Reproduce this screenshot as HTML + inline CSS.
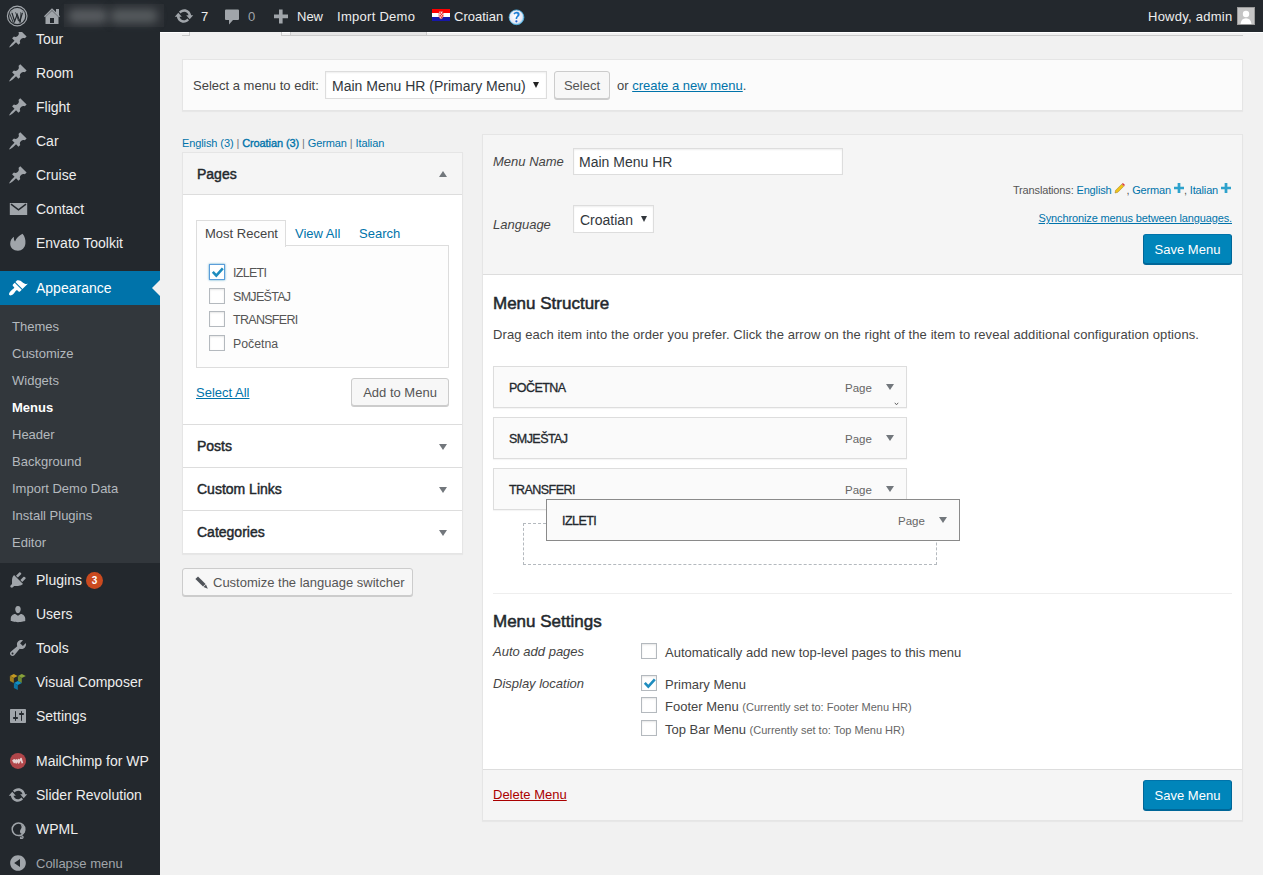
<!DOCTYPE html>
<html><head><meta charset="utf-8">
<style>
*{box-sizing:border-box}
html,body{margin:0;padding:0;width:1263px;height:875px;overflow:hidden;background:#f1f1f1;font-family:"Liberation Sans",sans-serif;font-size:13px;color:#444}
.abs{position:absolute}
a{color:#0073aa}
/* admin bar */
#ab{position:absolute;left:0;top:0;width:1263px;height:32px;background:#23282d;color:#eee;font-size:13px}
#ab .t{position:absolute;top:1px;line-height:32px;white-space:nowrap}
/* sidebar */
#side{position:absolute;left:0;top:32px;width:160px;height:843px;background:#23282d;overflow:hidden}
#menu{position:absolute;left:0;top:-10px;width:160px;margin:0;padding:0;list-style:none}
.mi{position:relative;height:34px;color:#eee;font-size:14px;line-height:34px;white-space:nowrap}
.mi .ic{position:absolute;left:8px;top:7px;width:20px;height:20px}
.mi .lb{position:absolute;left:36px;top:0}
.sep{height:11px}
.cur{background:#0073aa;color:#fff}
.sub{background:#32373c;padding:7px 0 8px}
.sub div{position:relative;top:1px;height:27px;line-height:27px;padding-left:12px;font-size:13px;color:#b4b9be;white-space:nowrap}
.sub div.on{color:#fff;font-weight:bold}
/* main */
.box{position:absolute;background:#fff;border:1px solid #e5e5e5;box-shadow:0 1px 1px rgba(0,0,0,.04)}
.btn{position:absolute;background:#f7f7f7;border:1px solid #ccc;border-radius:3px;box-shadow:0 1px 0 #ccc;color:#555;font-size:13px;text-align:center;white-space:nowrap;padding-top:1px}
.pbtn{position:absolute;background:#0085ba;border:1px solid #0073aa;border-color:#0073aa #006799 #006799;border-radius:3px;box-shadow:0 1px 0 #006799;color:#fff;font-size:14px;text-align:center;white-space:nowrap;padding-top:1px}
.cb{position:absolute;width:16px;height:16px;border:1px solid #b4b9be;background:#fff;box-shadow:inset 0 1px 2px rgba(0,0,0,.1)}
.arr{position:absolute;width:0;height:0;border-left:4.5px solid transparent;border-right:4.5px solid transparent;border-top:6px solid #72777c}
.arru{position:absolute;width:0;height:0;border-left:4.5px solid transparent;border-right:4.5px solid transparent;border-bottom:6px solid #72777c}
.t{position:absolute;white-space:nowrap}
</style></head><body>

<!-- ADMIN BAR -->
<div id="ab">
 <svg class="abs" style="left:6px;top:5px" width="22" height="22" viewBox="0 0 22 22">
  <circle cx="11.2" cy="11" r="9.8" fill="none" stroke="#a0a5aa" stroke-width="1.2"/>
  <circle cx="11.2" cy="11" r="8" fill="#a0a5aa"/>
  <path d="M5.6 6.6 L8.6 16.4 L11.2 9.4 L13.8 16.4 L16.8 6.6" fill="none" stroke="#23282d" stroke-width="1.2"/><path d="M3.6 8.4 L7.6 18.4 M9.6 7 L12.6 16.2 M15 7 L14.4 17.6" fill="none" stroke="#23282d" stroke-width="0.9"/>
  <path d="M3.8 7.2 H8.6 M9.6 7.2 H13.6 M15 7.2 H18.4" stroke="#a0a5aa" stroke-width="1.2"/>
 </svg>
 <svg class="abs" style="left:43px;top:7px" width="18" height="18" viewBox="0 0 18 18">
  <path d="M1 9.2 L9 1.2 L13 5.2 V2 H16 V8.2 L17 9.2 L16 10.2 L9 3.2 L2 10.2 Z" fill="#a0a5aa"/>
  <path d="M2.5 10 L9 3.8 L15.5 10 V17 H2.5 Z" fill="#a0a5aa"/>
  <rect x="7" y="11" width="4" height="5" fill="#23282d"/>
 </svg>
 <div class="abs" style="left:64px;top:4px;width:100px;height:23px;background:#2b2f34"></div>
 <div class="abs" style="left:68px;top:9px;width:40px;height:14px;border-radius:7px;background:#575b5f;filter:blur(4px)"></div>
 <div class="abs" style="left:110px;top:9px;width:48px;height:14px;border-radius:7px;background:#555a5d;filter:blur(4px)"></div>
 <svg class="abs" style="left:174px;top:6px" width="20" height="20" viewBox="0 0 20 20"><path fill="#a0a5aa" d="M10.2 3.28c3.53 0 6.43 2.61 6.92 6h2.08l-3.5 4-3.5-4h2.32c-.45-1.970-2.21-3.450-4.32-3.45-1.45 0-2.73.71-3.54 1.78L4.95 5.66C6.23 4.2 8.11 3.28 10.2 3.28zm-.4 13.44c-3.52 0-6.43-2.61-6.92-6H.8l3.5-4c1.17 1.33 2.33 2.67 3.5 4H5.48c.45 1.97 2.21 3.45 4.32 3.45 1.45 0 2.73-.71 3.54-1.78l1.71 1.95c-1.28 1.46-3.15 2.38-5.25 2.38z"/></svg>
 <span class="t" style="left:201px;color:#eee">7</span>
 <svg class="abs" style="left:224px;top:8px" width="16" height="18" viewBox="0 0 16 18">
  <path d="M2 1.5 H14 A1 1 0 0 1 15 2.5 V11 A1 1 0 0 1 14 12 H9 L5 16.5 V12 H2 A1 1 0 0 1 1 11 V2.5 A1 1 0 0 1 2 1.5 Z" fill="#a0a5aa"/>
 </svg>
 <span class="t" style="left:248px;color:#a0a5aa">0</span>
 <svg class="abs" style="left:273px;top:9px" width="16" height="15" viewBox="0 0 16 15">
  <path d="M6 0.5 H9.6 V5.6 H15 V9.2 H9.6 V14.5 H6 V9.2 H1 V5.6 H6 Z" fill="#a0a5aa"/>
 </svg>
 <span class="t" style="left:297px">New</span>
 <span class="t" style="left:337px;letter-spacing:0.28px">Import Demo</span>
 <svg class="abs" style="left:432px;top:9px" width="18" height="12" viewBox="0 0 18 12">
  <rect width="18" height="4" fill="#ff0000"/><rect y="4" width="18" height="4" fill="#fff"/><rect y="8" width="18" height="4" fill="#1717a8"/>
  <path d="M7 2.5 H11 V7 Q11 9.4 9 10 Q7 9.4 7 7 Z" fill="#fff" stroke="#d33" stroke-width="0.6"/>
  <rect x="7.6" y="3.3" width="1.4" height="1.4" fill="#e22"/><rect x="9.8" y="3.3" width="1.4" height="1.4" fill="#e22"/>
  <rect x="8.7" y="4.7" width="1.4" height="1.4" fill="#e22"/><rect x="7.6" y="6.1" width="1.4" height="1.4" fill="#e22"/><rect x="9.8" y="6.1" width="1.4" height="1.4" fill="#e22"/>
  <rect x="8.7" y="7.5" width="1.4" height="1.4" fill="#e22"/>
 </svg>
 <span class="t" style="left:454px">Croatian</span>
 <svg class="abs" style="left:508px;top:9px" width="17" height="17" viewBox="0 0 17 17">
  <defs><radialGradient id="hg" cx="0.45" cy="0.45" r="0.6"><stop offset="0" stop-color="#ffffff"/><stop offset="0.7" stop-color="#e6e8f5"/><stop offset="1" stop-color="#5fb8e6"/></radialGradient></defs>
  <circle cx="8.5" cy="8.3" r="7.4" fill="url(#hg)" stroke="#4fb3e3" stroke-width=".8"/>
  <path d="M5.4 4.4 Q6.6 2.8 8.8 2.8 Q11.6 3 11.6 5.4 Q11.6 7 10 8 Q9.2 8.6 9.2 10 H7.6 Q7.5 8 8.8 7 Q9.6 6.3 9.6 5.6 Q9.5 4.6 8.4 4.6 Q7.2 4.6 6.4 5.4 Z" fill="#1f7fd6"/>
  <circle cx="8.4" cy="12.3" r="1.1" fill="#1a5fd0"/>
 </svg>
 <span class="t" style="left:1148px;letter-spacing:0.25px">Howdy, admin</span>
 <div class="abs" style="left:1237px;top:7px;width:18px;height:18px;background:#c5c5c5;border:1px solid #9a9a9a;overflow:hidden">
  <svg class="abs" style="left:0;top:0" width="16" height="16" viewBox="0 0 16 16">
   <circle cx="8" cy="6" r="3.2" fill="#fff"/><path d="M2.5 16 Q3 10.5 8 10.2 Q13 10.5 13.5 16 Z" fill="#fff"/>
  </svg>
 </div>
</div>

<!-- MAIN -->
<div id="main">
 <!-- tabs remnants -->
 <div class="abs" style="left:160px;top:32px;width:1103px;height:1px;background:#fff"></div>
 <div class="abs" style="left:182px;top:35px;width:1061px;height:1px;background:#ccc"></div>
 <div class="abs" style="left:189px;top:32px;width:93px;height:4px;background:#f1f1f1;border-left:1px solid #ccc;border-right:1px solid #ccc"></div>
 <div class="abs" style="left:290px;top:32px;width:137px;height:4px;background:#e5e5e5;border:1px solid #ccc;border-top:0"></div>

 <!-- manage menus -->
 <div class="box" style="left:182px;top:59px;width:1061px;height:52px;background:#fbfbfb"></div>
 <span class="t" style="left:193px;top:79px;line-height:13px">Select a menu to edit:</span>
 <div class="abs" style="left:325px;top:71px;width:222px;height:28px;background:#fff;border:1px solid #ddd;box-shadow:inset 0 1px 2px rgba(0,0,0,.07)"></div>
 <span class="t" style="left:332px;top:79px;line-height:14px;font-size:14px;color:#32373c">Main Menu HR (Primary Menu)</span>
 <div class="arr" style="left:533px;top:82px;border-top-color:#222;border-left-width:3.5px;border-right-width:3.5px;border-top-width:6px"></div>
 <div class="btn" style="left:554px;top:71px;width:56px;height:28px;line-height:26px">Select</div>
 <span class="t" style="left:617px;top:79px;line-height:13px">or <a style="text-decoration:underline">create a new menu</a>.</span>

 <!-- language links -->
 <span class="t" style="left:182px;top:138px;line-height:11px;font-size:11px;color:#72777c;letter-spacing:-0.1px"><a style="text-decoration:none">English (3)</a> | <a style="text-decoration:none;-webkit-text-stroke:0.35px #0073aa">Croatian (3)</a> | <a style="text-decoration:none">German</a> | <a style="text-decoration:none">Italian</a></span>

 <!-- accordion -->
 <div class="box" style="left:182px;top:152px;width:281px;height:402px"></div>
 <div class="abs" style="left:183px;top:153px;width:279px;height:42px;background:#f5f5f5;border-bottom:1px solid #ddd"></div>
 <span class="t" style="left:197px;top:167px;line-height:14px;font-size:14px;-webkit-text-stroke:0.45px #23282d;color:#23282d">Pages</span>
 <div class="arru" style="left:439px;top:171px"></div>
 <!-- tabs -->
 <div class="abs" style="left:196px;top:245px;width:253px;height:123px;background:#fdfdfd;border:1px solid #ddd"></div>
 <div class="abs" style="left:196px;top:220px;width:90px;height:27px;background:#fdfdfd;border:1px solid #ddd;border-bottom:0"></div>
 <span class="t" style="left:205px;top:227px;line-height:13px">Most Recent</span>
 <span class="t" style="left:295px;top:227px;line-height:13px;color:#0073aa">View All</span>
 <span class="t" style="left:359px;top:227px;line-height:13px;color:#0073aa">Search</span>
 <div class="cb" style="left:209px;top:264px;border-color:#5b9dd9;box-shadow:0 0 2px rgba(30,140,190,.8)"></div>
 <svg class="abs" style="left:209px;top:264px" width="16" height="16" viewBox="0 0 16 16"><path d="M3.8 7.8L7.3 11.6L13.8 4.4" fill="none" stroke="#1e8cbe" stroke-width="2.6"/></svg>
 <div class="cb" style="left:209px;top:288px"></div>
 <div class="cb" style="left:209px;top:311px"></div>
 <div class="cb" style="left:209px;top:335px"></div>
 <span class="t" style="left:233px;top:267px;line-height:13px;color:#555;font-size:12.5px;letter-spacing:-0.7px">IZLETI</span>
 <span class="t" style="left:233px;top:291px;line-height:13px;color:#555;font-size:12.5px;letter-spacing:-0.7px">SMJEŠTAJ</span>
 <span class="t" style="left:233px;top:314px;line-height:13px;color:#555;font-size:12.5px;letter-spacing:-0.7px">TRANSFERI</span>
 <span class="t" style="left:233px;top:338px;line-height:13px;color:#555;font-size:12.3px">Početna</span>
 <span class="t" style="left:196px;top:386px;line-height:13px"><a style="text-decoration:underline">Select All</a></span>
 <div class="btn" style="left:351px;top:378px;width:98px;height:28px;line-height:26px">Add to Menu</div>
 <div class="abs" style="left:183px;top:424px;width:279px;height:1px;background:#ddd"></div>
 <span class="t" style="left:197px;top:439px;line-height:14px;font-size:14px;-webkit-text-stroke:0.45px #23282d;color:#23282d">Posts</span>
 <div class="arr" style="left:439px;top:444px"></div>
 <div class="abs" style="left:183px;top:467px;width:279px;height:1px;background:#ddd"></div>
 <span class="t" style="left:197px;top:482px;line-height:14px;font-size:14px;-webkit-text-stroke:0.45px #23282d;color:#23282d">Custom Links</span>
 <div class="arr" style="left:439px;top:487px"></div>
 <div class="abs" style="left:183px;top:510px;width:279px;height:1px;background:#ddd"></div>
 <span class="t" style="left:197px;top:525px;line-height:14px;font-size:14px;-webkit-text-stroke:0.45px #23282d;color:#23282d">Categories</span>
 <div class="arr" style="left:439px;top:530px"></div>

 <div class="btn" style="left:182px;top:568px;width:231px;height:28px;line-height:26px;text-align:left;padding-left:12px">
  <svg style="position:absolute;left:12px;top:7px" width="14" height="14" viewBox="0 0 14 14"><path d="M3 0.4L10.6 8 8 10.6 0.4 3z" fill="#50545a"/><path d="M11 8.5L12.8 12.8 8.5 11z" fill="#50545a"/></svg>
  <span style="position:absolute;left:30px;top:7px;line-height:13px">Customize the language switcher</span>
 </div>

 <!-- menu edit -->
 <div class="box" style="left:482px;top:134px;width:761px;height:687px"></div>
 <div class="abs" style="left:483px;top:135px;width:759px;height:140px;background:#f5f5f5;border-bottom:1px solid #ddd"></div>
 <span class="t" style="left:493px;top:155px;line-height:13px;font-style:italic">Menu Name</span>
 <div class="abs" style="left:573px;top:148px;width:270px;height:27px;background:#fff;border:1px solid #ddd;box-shadow:inset 0 1px 2px rgba(0,0,0,.07)"></div>
 <span class="t" style="left:579px;top:155px;line-height:14px;font-size:14px;color:#32373c">Main Menu HR</span>
 <span class="t" style="right:32px;top:182px;line-height:11px;font-size:11px;color:#555;letter-spacing:-0.15px">Translations: <a style="text-decoration:none">English</a> <svg width="12" height="12" viewBox="0 0 12 12" style="vertical-align:0"><path d="M1 11l.7-2.8 6-6 2.1 2.1-6 6z" fill="#f0c419" stroke="#9c7a1c" stroke-width=".5"/><path d="M7.9 1.9l1-1 2.1 2.1-1 1z" fill="#d33"/></svg>, <a style="text-decoration:none">German</a> <svg width="10" height="10" viewBox="0 0 11 11" style="vertical-align:1px"><path d="M4 0h3v4h4v3h-4v4h-3v-4h-4v-3h4z" fill="#2ea2cc"/></svg>, <a style="text-decoration:none">Italian</a> <svg width="10" height="10" viewBox="0 0 11 11" style="vertical-align:1px"><path d="M4 0h3v4h4v3h-4v4h-3v-4h-4v-3h4z" fill="#2ea2cc"/></svg></span>
 <span class="t" style="left:493px;top:218px;line-height:13px;font-style:italic">Language</span>
 <div class="abs" style="left:573px;top:205px;width:81px;height:28px;background:#fff;border:1px solid #ddd;box-shadow:inset 0 1px 2px rgba(0,0,0,.07)"></div>
 <span class="t" style="left:580px;top:213px;line-height:14px;font-size:14px;color:#32373c">Croatian</span>
 <div class="arr" style="left:641px;top:216px;border-top-color:#32373c;border-left-width:3.5px;border-right-width:3.5px"></div>
 <span class="t" style="right:31px;top:213px;line-height:11px;font-size:11px;letter-spacing:-0.13px"><a style="text-decoration:underline">Synchronize menus between languages.</a></span>
 <div class="pbtn" style="left:1143px;top:234px;width:89px;height:30px;line-height:28px;font-size:13px">Save Menu</div>

 <span class="t" style="left:493px;top:295px;line-height:17px;font-size:17px;-webkit-text-stroke:0.5px #23282d;color:#23282d">Menu Structure</span>
 <span class="t" style="left:493px;top:328px;line-height:13px;letter-spacing:0.08px">Drag each item into the order you prefer. Click the arrow on the right of the item to reveal additional configuration options.</span>

 <div class="abs" style="left:493px;top:366px;width:414px;height:42px;background:#fafafa;border:1px solid #ddd;box-shadow:0 1px 1px rgba(0,0,0,.04)"></div>
 <span class="t" style="left:509px;top:382px;line-height:13px;font-size:12.5px;letter-spacing:-0.55px;-webkit-text-stroke:0.3px #23282d;color:#23282d">POČETNA</span>
 <span class="t" style="left:845px;top:382px;line-height:12px;font-size:11.5px;color:#666">Page</span>
 <div class="arr" style="left:886px;top:384px"></div>
 <svg class="abs" style="left:894px;top:402px" width="5" height="4" viewBox="0 0 5 4"><path d="M0.8 0.8L2.5 2.8 4.2 0.8" fill="none" stroke="#555" stroke-width=".9"/></svg>
 <div class="abs" style="left:493px;top:417px;width:414px;height:42px;background:#fafafa;border:1px solid #ddd;box-shadow:0 1px 1px rgba(0,0,0,.04)"></div>
 <span class="t" style="left:509px;top:433px;line-height:13px;font-size:12.5px;letter-spacing:-0.55px;-webkit-text-stroke:0.3px #23282d;color:#23282d">SMJEŠTAJ</span>
 <span class="t" style="left:845px;top:433px;line-height:12px;font-size:11.5px;color:#666">Page</span>
 <div class="arr" style="left:886px;top:435px"></div>
 <div class="abs" style="left:493px;top:468px;width:414px;height:42px;background:#fafafa;border:1px solid #ddd;box-shadow:0 1px 1px rgba(0,0,0,.04)"></div>
 <span class="t" style="left:509px;top:484px;line-height:13px;font-size:12.5px;letter-spacing:-0.55px;-webkit-text-stroke:0.3px #23282d;color:#23282d">TRANSFERI</span>
 <span class="t" style="left:845px;top:484px;line-height:12px;font-size:11.5px;color:#666">Page</span>
 <div class="arr" style="left:886px;top:486px"></div>
 <div class="abs" style="left:523px;top:523px;width:414px;height:42px;border:1px dashed #b4b9be"></div>
 <div class="abs" style="left:546px;top:499px;width:414px;height:42px;background:#fafafa;border:1px solid #8a8a8a"></div>
 <span class="t" style="left:562px;top:515px;line-height:13px;font-size:12.5px;letter-spacing:-0.55px;-webkit-text-stroke:0.3px #23282d;color:#23282d">IZLETI</span>
 <span class="t" style="left:898px;top:515px;line-height:12px;font-size:11.5px;color:#666">Page</span>
 <div class="arr" style="left:939px;top:517px"></div>

 <div class="abs" style="left:493px;top:593px;width:739px;height:1px;background:#eee"></div>
 <span class="t" style="left:493px;top:613px;line-height:17px;font-size:17px;-webkit-text-stroke:0.5px #23282d;color:#23282d">Menu Settings</span>
 <span class="t" style="left:493px;top:645px;line-height:13px;font-style:italic">Auto add pages</span>
 <span class="t" style="left:493px;top:677px;line-height:13px;font-style:italic">Display location</span>
 <div class="cb" style="left:641px;top:643px"></div>
 <div class="cb" style="left:641px;top:675px"></div>
 <svg class="abs" style="left:641px;top:675px" width="16" height="16" viewBox="0 0 16 16"><path d="M3.8 7.8L7.3 11.6L13.8 4.4" fill="none" stroke="#1e8cbe" stroke-width="2.6"/></svg>
 <div class="cb" style="left:641px;top:697px"></div>
 <div class="cb" style="left:641px;top:720px"></div>
 <span class="t" style="left:665px;top:646px;line-height:13px">Automatically add new top-level pages to this menu</span>
 <span class="t" style="left:665px;top:678px;line-height:13px">Primary Menu</span>
 <span class="t" style="left:665px;top:700px;line-height:13px">Footer Menu <span style="font-size:11px;color:#666">(Currently set to: Footer Menu HR)</span></span>
 <span class="t" style="left:665px;top:723px;line-height:13px">Top Bar Menu <span style="font-size:11px;color:#666">(Currently set to: Top Menu HR)</span></span>

 <div class="abs" style="left:483px;top:769px;width:759px;height:51px;background:#f5f5f5;border-top:1px solid #ddd"></div>
 <span class="t" style="left:493px;top:788px;line-height:13px"><a style="color:#a00;text-decoration:underline">Delete Menu</a></span>
 <div class="pbtn" style="left:1143px;top:780px;width:89px;height:30px;line-height:28px;font-size:13px">Save Menu</div>
</div>

<!-- SIDEBAR -->
<div id="side">
<div id="menu">
 <div class="mi"><svg class="ic" viewBox="0 0 20 20"><path fill="#a0a5aa" d="M10.44 3.02l1.82-1.82 6.36 6.35-1.83 1.82c-1.05-.68-2.48-.57-3.41.36l-.75.75c-.92.93-1.04 2.35-.35 3.41l-1.83 1.82-2.41-2.41-2.8 2.79c-.42.42-3.38 2.710-3.8 2.29s1.86-3.39 2.28-3.81l2.79-2.79L4.1 9.36l1.83-1.82c1.05.69 2.48.57 3.4-.36l.75-.75c.93-.92 1.05-2.35.36-3.41z"/></svg><span class="lb">Tour</span></div>
 <div class="mi"><svg class="ic" viewBox="0 0 20 20"><path fill="#a0a5aa" d="M10.44 3.02l1.82-1.82 6.36 6.35-1.830 1.82c-1.05-.68-2.48-.57-3.41.36l-.75.75c-.92.93-1.04 2.35-.35 3.41l-1.83 1.82-2.41-2.41-2.8 2.79c-.42.42-3.38 2.71-3.8 2.29s1.86-3.39 2.28-3.81l2.79-2.79L4.1 9.36l1.83-1.82c1.05.69 2.48.57 3.4-.36l.75-.75c.93-.92 1.05-2.35.36-3.41z"/></svg><span class="lb">Room</span></div>
 <div class="mi"><svg class="ic" viewBox="0 0 20 20"><path fill="#a0a5aa" d="M10.44 3.02l1.82-1.82 6.36 6.35-1.83 1.82c-1.05-.68-2.48-.57-3.41.36l-.75.75c-.92.93-1.04 2.35-.35 3.41l-1.83 1.82-2.41-2.41-2.8 2.79c-.42.42-3.38 2.71-3.8 2.29s1.86-3.39 2.28-3.81l2.79-2.79L4.1 9.36l1.83-1.82c1.05.69 2.48.57 3.4-.36l.75-.75c.93-.92 1.05-2.35.36-3.41z"/></svg><span class="lb">Flight</span></div>
 <div class="mi"><svg class="ic" viewBox="0 0 20 20"><path fill="#a0a5aa" d="M10.44 3.02l1.82-1.82 6.36 6.35-1.83 1.82c-1.05-.68-2.48-.57-3.41.36l-.75.75c-.92.93-1.04 2.35-.35 3.41l-1.83 1.82-2.41-2.41-2.8 2.79c-.42.42-3.38 2.71-3.8 2.29s1.86-3.39 2.28-3.81l2.79-2.79L4.1 9.36l1.83-1.82c1.05.69 2.48.57 3.4-.36l.75-.75c.93-.92 1.05-2.35.36-3.41z"/></svg><span class="lb">Car</span></div>
 <div class="mi"><svg class="ic" viewBox="0 0 20 20"><path fill="#a0a5aa" d="M10.44 3.02l1.82-1.82 6.36 6.35-1.83 1.82c-1.05-.68-2.48-.57-3.41.36l-.75.75c-.92.93-1.04 2.35-.35 3.41l-1.83 1.82-2.41-2.41-2.8 2.79c-.42.42-3.38 2.71-3.8 2.29s1.86-3.39 2.28-3.81l2.79-2.79L4.1 9.36l1.83-1.82c1.05.69 2.48.57 3.4-.36l.75-.75c.93-.92 1.05-2.35.36-3.41z"/></svg><span class="lb">Cruise</span></div>
 <div class="mi"><svg class="ic" viewBox="0 0 20 20"><path fill="#a0a5aa" d="M1.8 4h17.4v12H1.8z"/><path fill="none" stroke="#23282d" stroke-width="1.5" d="M3 5.2l7.5 5.6 7.5-5.6"/></svg><span class="lb">Contact</span></div>
 <div class="mi"><svg class="ic" viewBox="0 0 20 20"><path fill="#a0a5aa" d="M14.5 0.8C16.8 3.2 17.8 7 17.4 10.6C17 14.8 14 17.8 10 17.8C5.4 17.8 2.2 14.6 2.2 10.8C2.2 7.6 3.8 5.2 6 3.8C5.6 5.6 6 7.4 7 8.6C8.4 5 11 2.4 14.5 0.8Z"/></svg><span class="lb">Envato Toolkit</span></div>
 <div class="sep"></div>
 <div class="mi cur"><svg class="ic" viewBox="0 0 20 20"><path fill="#fff" d="M14.48 11.06L7.41 3.99l1.5-1.5c.5-.56 2.3-.47 3.51.32 1.21.8 1.43 1.28 2.910 2.1 1.18.64 2.45 1.26 4.45.85zm-.71.71L6.7 4.7 4.93 6.47c-.39.39-.39 1.02 0 1.41l1.06 1.06c.39.39.39 1.03 0 1.42-.6.6-1.43 1.11-2.21 1.69-.35.26-.7.53-1.01.84C1.43 14.23.4 16.08 1.4 17.07c.99 1 2.84-.03 4.18-1.36.31-.31.58-.66.85-1.02.57-.78 1.08-1.61 1.69-2.21.39-.39 1.02-.39 1.41 0l1.060 1.06c.39.39 1.02.39 1.41 0z"/></svg><span class="lb" style="color:#fff">Appearance</span>
  <div class="abs" style="right:0;top:9px;width:0;height:0;border-top:8px solid transparent;border-bottom:8px solid transparent;border-right:8px solid #f1f1f1"></div></div>
 <div class="sub">
  <div>Themes</div><div>Customize</div><div>Widgets</div><div class="on">Menus</div><div>Header</div><div>Background</div><div>Import Demo Data</div><div>Install Plugins</div><div>Editor</div>
 </div>
 <div class="mi"><svg class="ic" viewBox="0 0 20 20"><path fill="#a0a5aa" d="M13.11 4.36L9.87 7.6 8 5.73l3.24-3.24c.35-.34 1.05-.2 1.56.32.52.51.66 1.21.31 1.55zm-8 1.77l.91-1.12 9.01 9.01-1.19.84c-.71.71-2.63 1.16-3.82 1.16H6.14L4.9 17.26c-.59.59-1.54.59-2.12 0-.59-.58-.59-1.53 0-2.12l1.24-1.24v-3.88c0-1.13.4-3.19 1.09-3.89zm7.26 3.97l3.24-3.24c.34-.35 1.040-.21 1.55.31.52.51.66 1.21.31 1.55l-3.24 3.25z"/></svg><span class="lb">Plugins</span>
  <span class="abs" style="left:86px;top:9px;width:17px;height:17px;border-radius:9px;background:#ca4a1f;color:#fff;font-size:10px;line-height:17px;text-align:center;font-weight:bold">3</span></div>
 <div class="mi"><svg class="ic" viewBox="0 0 20 20"><path fill="#a0a5aa" d="M10 9.25c-2.27 0-2.73-3.44-2.73-3.44C7 4.02 7.82 2 9.97 2c2.16 0 2.98 2.02 2.71 3.81 0 0-.41 3.44-2.68 3.44zm0 2.57L12.72 10c2.39 0 4.52 2.33 4.52 4.53v2.49s-3.65 1.13-7.24 1.130c-3.65 0-7.24-1.13-7.24-1.13v-2.49c0-2.25 1.94-4.48 4.47-4.48z"/></svg><span class="lb">Users</span></div>
 <div class="mi"><svg class="ic" viewBox="0 0 20 20"><path fill="#a0a5aa" d="M16.68 9.77c-1.34 1.34-3.3 1.67-4.95.99l-5.41 6.52c-.99.99-2.59.99-3.58 0s-.99-2.59 0-3.57l6.52-5.42c-.68-1.65-.35-3.61.99-4.95 1.28-1.28 3.12-1.62 4.72-1.06l-2.89 2.89 2.82 2.82 2.86-2.87c.53 1.58.18 3.39-1.08 4.65zM3.81 16.21c.4.39 1.04.39 1.43 0 .4-.4.4-1.04 0-1.43-.39-.4-1.03-.4-1.43 0-.39.39-.39 1.03 0 1.43z"/></svg><span class="lb">Tools</span></div>
 <div class="mi"><svg class="ic" viewBox="0 0 20 20"><path fill="#c49a22" d="M1.9 4L5.8 2 9.6 4 5.8 6z"/><path fill="#a3801d" d="M1.9 4L5.8 6V11L1.9 9z"/><path fill="#88a23a" d="M9.9 4L13.8 2 17.8 4 13.8 6z"/><path fill="#6d8731" d="M9.9 4L13.8 6V11L9.9 9z"/><path fill="#1090c6" d="M5.9 10.9L9.8 8.9 13.8 10.9 9.8 12.9z"/><path fill="#0c74a3" d="M5.9 10.9L9.8 12.9V18L5.9 16z"/></svg><span class="lb">Visual Composer</span></div>
 <div class="mi"><svg class="ic" viewBox="0 0 20 20"><path fill="#a0a5aa" d="M18 16V4c0-.55-.45-1-1-1H3c-.55 0-1 .45-1 1v12c0 .55.45 1 1 1h14c.55 0 1-.45 1-1zM8 11h1c.55 0 1 .45 1 1s-.45 1-1 1H8v1.5c0 .28-.22.5-.5.5s-.5-.22-.5-.5V13H6c-.55 0-1-.45-1-1s.45-1 1-1h1V5.5c0-.28.22-.5.5-.5s.5.22.5.5V11zm5-2h-1c-.55 0-1-.45-1-1s.45-1 1-1h1V5.5c0-.28.22-.5.5-.5s.5.22.5.5V7h1c.55 0 1 .45 1 1s-.45 1-1 1h-1v5.5c0 .28-.22.5-.5.5s-.5-.22-.5-.5V9z"/></svg><span class="lb">Settings</span></div>
 <div class="sep"></div>
 <div class="mi"><svg class="ic" viewBox="0 0 20 20"><circle cx="10" cy="9.9" r="8" fill="#b0464a"/><path fill="none" stroke="#e9d3d3" stroke-width="1.7" stroke-linejoin="round" d="M4.6 10.4l1.6-1.6v2.6l2-2.4v2.8l2.4-3.2v3.2l2.4-4.2 1.4 4.6"/></svg><span class="lb">MailChimp for WP</span></div>
 <div class="mi"><svg class="ic" viewBox="0 0 20 20"><path fill="#a0a5aa" d="M10.2 3.28c3.53 0 6.43 2.61 6.92 6h2.08l-3.5 4-3.5-4h2.32c-.45-1.97-2.21-3.45-4.32-3.45-1.45 0-2.73.71-3.54 1.78L4.95 5.66C6.23 4.2 8.11 3.28 10.2 3.28zm-.4 13.44c-3.52 0-6.43-2.61-6.92-6H.8l3.5-4c1.17 1.33 2.33 2.67 3.5 4H5.48c.45 1.97 2.21 3.45 4.32 3.45 1.45 0 2.73-.71 3.54-1.78l1.71 1.95c-1.28 1.46-3.15 2.38-5.25 2.38z"/></svg><span class="lb">Slider Revolution</span></div>
 <div class="mi"><svg class="ic" viewBox="0 0 20 20"><circle cx="10.5" cy="10.3" r="6.3" fill="none" stroke="#a0a5aa" stroke-width="1.5"/><path fill="#a0a5aa" d="M12.6 5.2C15.2 6.2 17.4 8.6 17.2 11.6C17 13.6 15.8 14.9 14.3 14.9C12.9 14.9 12 13.8 12 12.4C12 10.8 13.5 9.8 13.6 8.2C13.6 7.2 13.2 6 12.6 5.2Z"/><path fill="none" stroke="#a0a5aa" stroke-width="1.3" d="M10.8 16.6C12.8 16.5 15 16.6 15.1 18C15.1 19.4 13.4 19.7 12.6 18.9"/><circle cx="12.8" cy="19" r="1" fill="#a0a5aa"/></svg><span class="lb">WPML</span></div>
 <div class="mi"><svg class="ic" viewBox="0 0 20 20"><path fill="#a0a5aa" d="M10 2.16c4.33 0 7.84 3.51 7.84 7.84s-3.51 7.840-7.84 7.84S2.16 14.33 2.16 10 5.710 2.16 10 2.16zm2 11.72V6.12L6.18 9.97z"/></svg><span class="lb" style="color:#a0a5aa;font-size:13px;top:1px">Collapse menu</span></div>
</div>
</div>

</body></html>
